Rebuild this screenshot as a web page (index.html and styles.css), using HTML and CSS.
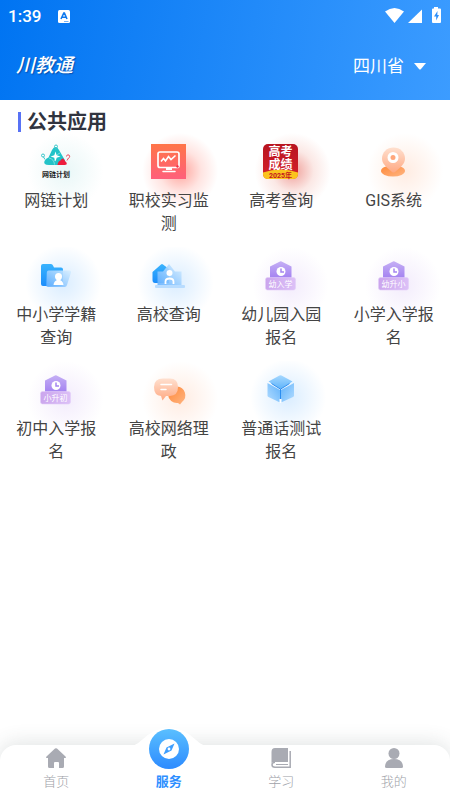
FILE: index.html
```html
<!DOCTYPE html>
<html lang="zh-CN">

<head>
    <meta charset="UTF-8">
    <meta name="viewport" content="width=device-width, initial-scale=1">
    <title>川教通</title>
    <link rel="stylesheet" href="styles.css">
</head>

<body>

    <!-- Shared gradients and symbols -->
    <svg class="defs" width="0" height="0" aria-hidden="true">
        <defs>
            <linearGradient id="gCoral" x1="0" y1="0" x2="0" y2="1">
                <stop offset="0" stop-color="#ff7548" />
                <stop offset="1" stop-color="#ff5f7b" />
            </linearGradient>
            <linearGradient id="gRed" x1="0" y1="0" x2="0" y2="1">
                <stop offset="0" stop-color="#b8141f" />
                <stop offset="1" stop-color="#d5202b" />
            </linearGradient>
            <linearGradient id="gPeach" x1="0" y1="0" x2="0" y2="1">
                <stop offset="0" stop-color="#ffe0cf" />
                <stop offset="1" stop-color="#ffa983" />
            </linearGradient>
            <linearGradient id="gOrange" x1="0" y1="0" x2="1" y2="1">
                <stop offset="0" stop-color="#ff8838" />
                <stop offset="1" stop-color="#ffb582" />
            </linearGradient>
            <linearGradient id="gBlue" x1="0" y1="0" x2="0" y2="1">
                <stop offset="0" stop-color="#39b3fd" />
                <stop offset="1" stop-color="#1c8dfb" />
            </linearGradient>
            <linearGradient id="gGlass" x1="0" y1="1" x2="1" y2="0">
                <stop offset="0" stop-color="#62b0ff" />
                <stop offset="1" stop-color="#d9efff" />
            </linearGradient>
            <linearGradient id="gPurple" x1="0" y1="0" x2="0" y2="1">
                <stop offset="0" stop-color="#c5aff5" />
                <stop offset="1" stop-color="#a07df0" />
            </linearGradient>
            <linearGradient id="gLilac" x1="0" y1="0" x2="1" y2="0">
                <stop offset="0" stop-color="#cba5ed" />
                <stop offset="1" stop-color="#dcc0f7" />
            </linearGradient>
            <linearGradient id="gCompass" x1="0" y1="0" x2="0" y2="1">
                <stop offset="0" stop-color="#5abfff" />
                <stop offset="1" stop-color="#2d8bff" />
            </linearGradient>
            <linearGradient id="gCubeLeft" x1="1" y1="0" x2="0" y2="1">
                <stop offset="0" stop-color="#62b3fb" />
                <stop offset="1" stop-color="#b3dcff" />
            </linearGradient>
            <linearGradient id="gCubeRight" x1="0" y1="0" x2="1" y2="1">
                <stop offset="0" stop-color="#62b3fb" />
                <stop offset="1" stop-color="#b3dcff" />
            </linearGradient>
            <linearGradient id="gCubeTop" x1="0" y1="0" x2="0" y2="1">
                <stop offset="0" stop-color="#a6d8ff" />
                <stop offset="1" stop-color="#5fb4fa" />
            </linearGradient>
            <symbol id="house" viewBox="0 0 56 56">
                <path d="M17 21V19.500L27 14.500q.8-.5 1.600 0L38.500 19.500V33H17z" fill="url(#gPurple)" />
                <circle cx="28" cy="24.500" r="4.500" fill="#fff" />
                <path d="M28 21.500v3.500h3" fill="none" stroke="#a585ef" stroke-width="1.500" />
                <rect x="12.500" y="30.500" width="30" height="12.500" rx="2" fill="url(#gLilac)" stroke="#e3cff8" stroke-width=".6" />
            </symbol>
        </defs>
    </svg>

    <header class="header">
        <div class="status-bar">
            <span class="time">1:39</span>
            <svg class="status-app" width="12" height="13" viewBox="0 0 12 13">
                <rect width="12" height="13" rx="1.500" fill="#fff" />
                <path d="M3 9 5.800 3h.6L9 9M4 7.200h4" fill="none" stroke="#1079ee" stroke-width="1.600" />
                <path d="M6 11.500h4.500" stroke="#7ab5f7" stroke-width="1" />
            </svg>
            <svg class="status-icons" width="57" height="18" viewBox="0 0 57 18">
                <path d="M0 4.500Q9.500-2.500 19 4.500L9.500 16z" fill="#fff" />
                <path d="M37 2.500V16H23z" fill="#fff" />
                <path d="M49 0h4v1.500h2q1 0 1 1V15q0 1-1 1h-7q-1 0-1-1V2.500q0-1 1-1h1z" fill="#fff" />
                <path d="M52.500 4 49 9.500h2.200V13.500L54 8h-1.700z" fill="#2d8ffa" />
            </svg>
        </div>
        <div class="title-bar">
            <h1 class="logo">川教通</h1>
            <label class="region">
                <select class="region-select" aria-label="地区">
                    <option>四川省</option>
                </select>
                <svg width="12" height="7" viewBox="0 0 12 7">
                    <path d="M0 0h12L6.800 6.200q-.8.8-1.600 0z" fill="#fff" />
                </svg>
            </label>
        </div>
    </header>

    <main class="content">
        <h2 class="section-title">公共应用</h2>

        <div class="app-grid">
            <a class="app glow-teal" href="#">
                <svg class="app-icon" viewBox="0 0 56 56">
                    <path d="M27.500 14q2 0 3.500 3l5.500 9.500q3 5.500-2 5.500H21q-6 0-4.500-4 1.500-3 4-3.500L24 17q1.500-3 3.500-3z" fill="#22c3c8" />
                    <path d="M21 25q5 1 5.500 6.500M32 20q-5 2-5.500 8" fill="none" stroke="#8ee5e5" stroke-width=".8" />
                    <path d="M27.500 18.500l1.200 3.700 3.800 1.300-3.800 1.300-1.200 3.700-1.200-3.700-3.800-1.300 3.800-1.300z" fill="#fff" />
                    <path d="M29.500 32q.5-4 3-4.500 2-3.500 4-.5 1 2 2 2.500 1 2.500-2 2.500z" fill="#ee1c3c" />
                    <g fill="none" stroke="#38c6ca" stroke-width="1">
                        <circle cx="28" cy="13.500" r="1.500" />
                        <path d="M28 15v2" />
                        <circle cx="15" cy="22.500" r="1.500" />
                        <path d="M15.500 24l1.500 2.500" />
                    </g>
                    <path d="M38.500 23.500a1.600 1.600 0 1 1 2 1.500l-1.500 2.500" fill="none" stroke="#f04a62" stroke-width="1" />
                    <text class="mini-dark" x="28" y="43.500">网链计划</text>
                </svg>
                <span class="app-name">网链计划</span>
            </a>
            <a class="app glow-coral" href="#">
                <svg class="app-icon" viewBox="0 0 56 56">
                    <rect x="10" y="11" width="35" height="35" fill="url(#gCoral)" />
                    <rect x="17" y="19" width="21" height="15.500" rx="2" fill="none" stroke="#fff" stroke-width="1.700" />
                    <path d="M20 28.500l2.500-3 2 2.500 3-4.500 2.500 3 4.500-4" fill="none" stroke="#fff" stroke-width="1.600" />
                    <path d="M25 34.500h6V37h-6z" fill="#fff" />
                    <path d="M22 38.500h12" stroke="#fff" stroke-width="1.500" stroke-linecap="round" />
                    <circle cx="36.500" cy="33.500" r="1.200" fill="#f42d43" />
                </svg>
                <span class="app-name">职校实习监测</span>
            </a>
            <a class="app glow-red" href="#">
                <svg class="app-icon" viewBox="0 0 56 56">
                    <rect x="10" y="11" width="35" height="35" rx="5" fill="url(#gRed)" />
                    <path d="M10 39.500q17.500-6 35 0V41q0 5-5 5H15q-5 0-5-5z" fill="#fbc31e" />
                    <text class="mini-score" x="27.500" y="23">高考</text>
                    <text class="mini-score" x="27.500" y="35.500">成绩</text>
                    <text class="mini-year" x="27.500" y="44.500">2025年</text>
                </svg>
                <span class="app-name">高考查询</span>
            </a>
            <a class="app glow-orange" href="#">
                <svg class="app-icon" viewBox="0 0 56 56">
                    <ellipse cx="27" cy="38" rx="12" ry="5.500" fill="url(#gOrange)" />
                    <path d="M27.500 14.500c6.500 0 11.500 4.800 11.500 11 0 5-3.500 8-10 13.500q-1.500 1-3 0c-6.500-5.500-10-8.500-10-13.500 0-6.200 5-11 11.500-11z" fill="url(#gPeach)" />
                    <circle cx="27" cy="24.500" r="4" fill="#ffa77c" stroke="#fff" stroke-width="3" />
                </svg>
                <span class="app-name">GIS系统</span>
            </a>

            <a class="app glow-blue" href="#">
                <svg class="app-icon" viewBox="0 0 56 56">
                    <path d="M15 17h8q1.500 0 2 1.500l1 2h7q2 0 2 2V37q0 2-2 2H15q-2 0-2-2V19q0-2 2-2z" fill="url(#gBlue)" />
                    <path d="M20.500 23.500h21q2 0 1.500 2L39 38q-.5 2-2.500 2H20q-2 0-1.700-2l.5-12.500q.2-2 1.700-2z" fill="url(#gGlass)" opacity=".9" />
                    <circle cx="30.500" cy="29.500" r="3.500" fill="#fff" />
                    <path d="M28.500 32h4v1.500q2.500.5 3 4.500H25.500q.5-4 3-4.500z" fill="#fff" />
                </svg>
                <span class="app-name">中小学学籍查询</span>
            </a>
            <a class="app glow-blue" href="#">
                <svg class="app-icon" viewBox="0 0 56 56">
                    <path d="M11.500 25 20 17.500q1-.8 2 0L28 22v14l-14 0q-2.500 0-2.500-3z" fill="url(#gBlue)" />
                    <path d="M16.500 24.500h5.500l6-7.500 6 7.500h6.500V39h-24z" fill="url(#gGlass)" opacity=".9" />
                    <rect x="14" y="38" width="30" height="3" rx="1" fill="#b8dcff" />
                    <circle cx="28.500" cy="26" r="3" fill="#fff" />
                    <path d="M24.500 37v-2.500q0-3 4-3t4 3V37" fill="none" stroke="#fff" stroke-width="1.800" />
                </svg>
                <span class="app-name">高校查询</span>
            </a>
            <a class="app glow-purple" href="#">
                <svg class="app-icon" viewBox="0 0 56 56">
                    <use href="#house" />
                    <text class="mini-light" x="27.500" y="40">幼入学</text>
                </svg>
                <span class="app-name">幼儿园入园报名</span>
            </a>
            <a class="app glow-purple" href="#">
                <svg class="app-icon" viewBox="0 0 56 56">
                    <use href="#house" />
                    <text class="mini-light" x="27.500" y="40">幼升小</text>
                </svg>
                <span class="app-name">小学入学报名</span>
            </a>

            <a class="app glow-purple" href="#">
                <svg class="app-icon" viewBox="0 0 56 56">
                    <use href="#house" />
                    <text class="mini-light" x="27.500" y="40">小升初</text>
                </svg>
                <span class="app-name">初中入学报名</span>
            </a>
            <a class="app glow-orange" href="#">
                <svg class="app-icon" viewBox="0 0 56 56">
                    <path d="M36 25.500a8.700 8.700 0 0 1 5 15.500l-2 2.500-2-1.500a9 9 0 0 1-10-8.500c0-4.500 4-8 9-8z" fill="url(#gOrange)" />
                    <path d="M22 17.500h7q8 0 8 8.500t-8 9h-4l-3.500 4.500L20 35q-7-.5-7-9 0-8.500 9-8.500z" fill="url(#gPeach)" />
                    <path d="M20 23.500h10.500M20 28.500h5" stroke="#fff" stroke-width="1.500" stroke-linecap="round" />
                </svg>
                <span class="app-name">高校网络理政</span>
            </a>
            <a class="app glow-blue" href="#">
                <svg class="app-icon" viewBox="0 0 56 56">
                    <path d="M14.500 22 27 29v12.500L15.500 36q-1-.5-1-1.500z" fill="url(#gCubeLeft)" />
                    <path d="M41 22 28 29v12.500L40 36q1-.5 1-1.500z" fill="url(#gCubeRight)" />
                    <path d="M15.500 20.500 26.500 14.500q1-.5 2 0L39.500 20.500 27.500 28z" fill="url(#gCubeTop)" />
                    <path d="M18.500 22.500 27.500 28.200 36.500 22.500M27.500 28V38" fill="none" stroke="#2c8df0" stroke-width="1" />
                    <path d="M27.500 38v4" stroke="#fff" stroke-width="2" />
                </svg>
                <span class="app-name">普通话测试报名</span>
            </a>
        </div>
    </main>

    <nav class="tab-bar">
        <a class="tab" href="#">
            <svg class="tab-icon" viewBox="0 0 20 20">
                <path d="M9 .6q1-.9 2 0l8.500 8q1 1.400-.5 1.400h-1v8.500q0 1.500-1.500 1.500H13v-5q0-1-1-1H9q-1 0-1 1v5H3.500Q2 20 2 18.500V10H1Q-.5 10 .5 8.600z" fill="#a9abb3" />
            </svg>
            <span>首页</span>
        </a>
        <a class="tab active" href="#">
            <svg class="tab-bump" viewBox="0 0 78 22">
                <path d="M0 22C12 22 16 4 39 4S66 22 78 22z" fill="#fff" />
            </svg>
            <svg class="tab-compass" viewBox="0 0 40 40">
                <circle cx="20" cy="20" r="20" fill="url(#gCompass)" />
                <circle cx="20" cy="20" r="10" fill="#fff" />
                <path d="M25.500 14.500 22.500 21.500 14.500 25.500 17.500 18.500z" fill="#3e9efe" />
                <circle cx="20" cy="20" r="1.400" fill="#fff" />
            </svg>
            <span>服务</span>
        </a>
        <a class="tab" href="#">
            <svg class="tab-icon" viewBox="0 0 20 20">
                <path d="M4 0h13v14H3q-1.500 0-2.500 1V4Q.5 0 4 0z" fill="#a9abb3" />
                <path d="M19.200 3v16.200H4q-3 0-3-2.500t3-2.500" fill="none" stroke="#a9abb3" stroke-width="1.500" />
                <path d="M5 16.500h12" stroke="#a9abb3" stroke-width="1" />
            </svg>
            <span>学习</span>
        </a>
        <a class="tab" href="#">
            <svg class="tab-icon" viewBox="0 0 20 20">
                <circle cx="10" cy="5.500" r="5.500" fill="#a9abb3" />
                <path d="M1 18.500Q1.500 11 10 11t9 7.500q0 1.500-1.500 1.500h-15Q1 20 1 18.500z" fill="#a9abb3" />
            </svg>
            <span>我的</span>
        </a>
    </nav>

</body>

</html>
```

FILE: styles.css
```css
* {
    box-sizing: border-box;
}

body {
    margin: 0;
    min-height: 100vh;
    display: flex;
    flex-direction: column;
    font-family: Roboto, "Noto Sans CJK SC", sans-serif;
    background-color: #fff;
    color: #444;
}

a {
    color: inherit;
    text-decoration: none;
}

.defs {
    position: absolute;
}

/* Header */
.header {
    height: 100px;
    background: linear-gradient(100deg, #0074f2, #3c9cff);
    color: #fff;
}

.status-bar {
    display: flex;
    align-items: center;
    gap: 17px;
    height: 32px;
    padding: 0 8px;
}

.time {
    font-size: 17px;
    font-weight: 500;
}

.status-icons {
    margin-left: auto;
}

.title-bar {
    display: flex;
    align-items: center;
    justify-content: space-between;
    height: 68px;
    padding: 0 24px 0 16px;
}

.logo {
    margin: 0;
    font-size: 19px;
    font-style: italic;
    font-weight: 500;
    line-height: 28px;
    text-shadow: 1px 1px 1px rgba(0, 40, 110, 0.5);
}

.region {
    display: flex;
    align-items: center;
    gap: 10px;
}

.region-select {
    appearance: none;
    padding: 0;
    border: none;
    background: none;
    color: #fff;
    font-family: inherit;
    font-size: 17px;
    font-weight: 400;
}

/* Apps */
.content {
    flex: 1;
}

.section-title {
    display: flex;
    align-items: center;
    gap: 6px;
    margin: 0;
    padding: 9px 18px 0;
    font-size: 20px;
    font-weight: 700;
    line-height: 26px;
    color: #31343f;
}

.section-title::before {
    content: "";
    width: 3px;
    height: 20px;
    background-color: #5872f5;
}

.app-grid {
    display: grid;
    grid-template-columns: repeat(4, 1fr);
    row-gap: 12px;
    margin-top: -2px;
}

.app {
    display: flex;
    flex-direction: column;
    align-items: center;
    padding: 0 14px;
}

.app-icon {
    width: 56px;
    height: 56px;
}

.app-name {
    font-size: 16px;
    font-weight: 400;
    line-height: 23px;
    text-align: center;
}

/* Soft glow behind each icon */
.glow-teal {
    background: radial-gradient(circle 38px at 58% 38px, #e9f7f7, #fff);
}

.glow-coral {
    background: radial-gradient(circle 38px at 60% 38px, #ffa49c, #ffe4e1 55%, #fff);
}

.glow-red {
    background: radial-gradient(circle 38px at 60% 38px, #f0a09a, #fbe8e5 55%, #fff);
}

.glow-orange {
    background: radial-gradient(circle 38px at 60% 38px, #ffece2, #fff);
}

.glow-blue {
    background: radial-gradient(circle 38px at 56% 36px, #daedff, #fff);
}

.glow-purple {
    background: radial-gradient(circle 38px at 58% 38px, #f3ecfc, #fff);
}

.mini-dark,
.mini-light,
.mini-score,
.mini-year {
    text-anchor: middle;
}

.mini-dark {
    font-size: 7px;
    font-weight: 700;
    fill: #222;
}

.mini-light {
    font-size: 8px;
    fill: #fff;
}

.mini-score {
    font-size: 12px;
    font-weight: 700;
    fill: #fff;
}

.mini-year {
    font-size: 7px;
    font-weight: 700;
    fill: #c4161f;
}

/* Bottom tabs */
.tab-bar {
    position: sticky;
    bottom: 0;
    display: grid;
    grid-template-columns: repeat(4, 1fr);
    height: 55px;
    border-radius: 16px 16px 0 0;
    background-color: #fff;
    box-shadow: 0 -2px 20px rgba(60, 80, 80, 0.16);
}

.tab {
    position: relative;
    display: flex;
    flex-direction: column;
    align-items: center;
    justify-content: flex-end;
    gap: 4px;
    padding-bottom: 8px;
    font-size: 13px;
    font-weight: 300;
    line-height: 20px;
    color: #a0a2a9;
}

.tab-icon {
    width: 20px;
    height: 20px;
}

.tab.active {
    color: #2f8fff;
    font-weight: 700;
}

/* White hump and round button that rise above the bar */
.tab-bump {
    position: absolute;
    top: -21px;
    left: 50%;
    width: 78px;
    height: 22px;
    transform: translateX(-50%);
}

.tab-compass {
    position: absolute;
    top: -16px;
    left: 50%;
    width: 40px;
    height: 40px;
    transform: translateX(-50%);
}
```
